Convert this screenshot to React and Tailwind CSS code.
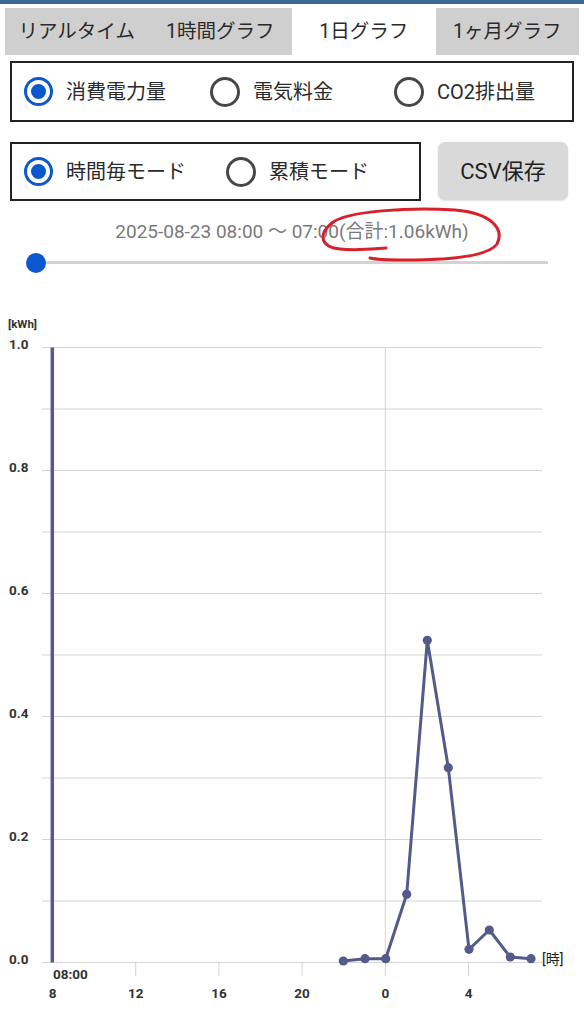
import { useState } from "react";

const TABS = ["リアルタイム", "1時間グラフ", "1日グラフ", "1ヶ月グラフ"];
const LINE = "#535b8b";

// measured points for 22:00 .. 07:00
const POINTS = [
  [343.3, 960],
  [365, 957.7],
  [385.7, 957.7],
  [406.7, 893.3],
  [427.3, 639.3],
  [448.3, 766.7],
  [469, 948.3],
  [489.3, 929],
  [510.3, 956],
  [531, 957.7],
];

const hx = (i) => 52.5 + i * 20.8;
const gy = (k) => 961.5 - k * 61.5;

export default function App() {
  const [tab, setTab] = useState(2);
  const [kind, setKind] = useState(0);
  const [mode, setMode] = useState(0);

  return (
    <div className="w-[584px] h-[1024px] bg-white overflow-hidden font-['Roboto','Noto_Sans_CJK_JP',sans-serif] text-[#222]">
      <div className="h-[4px] bg-[#3b6896]" />

      <div className="mt-[4px] mx-[5px] grid grid-cols-4 h-[47px]">
        {TABS.map((t, i) => (
          <button
            key={t}
            onClick={() => setTab(i)}
            className={`flex items-center justify-center text-[19.5px] text-[#2a2a2a] ${
              tab === i ? "bg-white" : "bg-[#cfcfcf]"
            }`}
          >
            {t}
          </button>
        ))}
      </div>

      <div className="mt-[6px] mx-[10px] h-[61px] border-2 border-[#222] grid grid-cols-[186px_184px_1fr] items-center pl-[12px]">
        {["消費電力量", "電気料金", "CO2排出量"].map((l, i) => (
          <Radio key={l} label={l} checked={kind === i} onClick={() => setKind(i)} />
        ))}
      </div>

      <div className="mt-[20px] mx-[10px] flex items-start">
        <div className="w-[411px] h-[59px] border-2 border-[#222] grid grid-cols-[202px_1fr] items-center pl-[12px]">
          {["時間毎モード", "累積モード"].map((l, i) => (
            <Radio key={l} label={l} checked={mode === i} onClick={() => setMode(i)} />
          ))}
        </div>
        <button className="ml-[17px] w-[130px] h-[58px] rounded-[7px] bg-[#d9d9d9] text-[22px] text-[#222] shadow-[0_1px_2px_rgba(0,0,0,0.12)]">
          CSV保存
        </button>
      </div>

      <div className="relative">
        <div className="pt-[18px] text-center text-[19px] leading-[26px] text-[#7a7a7a]">
          2025-08-23 08:00 〜 07:00(合計:1.06kWh)
        </div>
        <div className="relative mt-[16px] ml-[36px] mr-[36px] h-[3px] bg-[#d3d3d3]">
          <div className="absolute left-[-10px] top-[-8.5px] w-[20px] h-[20px] rounded-full bg-[#0b57d0]" />
        </div>
        <svg
          className="absolute left-0 top-0 pointer-events-none"
          width="584"
          height="80"
          viewBox="0 201 584 80"
          fill="none"
        >
          <path
            d="M332 223 C346 211 410 207 455 210 C490 213 505 228 497 244 C488 257 445 260 405 260 C390 260 378 260 370 258"
            stroke="#d8202b"
            strokeWidth="3"
            strokeLinecap="round"
          />
          <path
            d="M332 223 C318 234 320 247 340 249 C356 251 372 249 386 248"
            stroke="#d8202b"
            strokeWidth="3"
            strokeLinecap="round"
          />
        </svg>
      </div>

      <Chart />
    </div>
  );
}

function Radio({ label, checked, onClick }) {
  return (
    <div className="flex items-center gap-[13px] cursor-pointer" onClick={onClick}>
      {checked ? (
        <span className="w-[29px] h-[29px] rounded-full border-[3.5px] border-[#0b57d0] flex items-center justify-center">
          <span className="w-[15px] h-[15px] rounded-full bg-[#0b57d0]" />
        </span>
      ) : (
        <span className="w-[30px] h-[30px] rounded-full border-[3px] border-[#474747]" />
      )}
      <span className="text-[20px] text-[#2a2a2a]">{label}</span>
    </div>
  );
}

function Chart() {
  const ylabels = [10, 8, 6, 4, 2, 0];
  const xlabels = [
    [0, "8"],
    [4, "12"],
    [8, "16"],
    [12, "20"],
    [16, "0"],
    [20, "4"],
  ];
  const pts = POINTS.map((p) => p.join(",")).join(" ");

  return (
    <svg className="block mt-[27px]" width="584" height="734" viewBox="0 290 584 734">
      {Array.from({ length: 11 }, (_, k) => (
        <line key={k} x1="42" x2="542" y1={gy(k)} y2={gy(k)} stroke="#d4d4d4" strokeWidth="1" />
      ))}
      <line x1={hx(16)} x2={hx(16)} y1={gy(10)} y2="975" stroke="#d4d4d4" strokeWidth="1" />
      {[4, 8, 12, 20].map((i) => (
        <line key={i} x1={hx(i)} x2={hx(i)} y1={gy(0)} y2="975" stroke="#d4d4d4" strokeWidth="1" />
      ))}
      <line x1="52.3" x2="52.3" y1={gy(10)} y2={gy(0)} stroke={LINE} strokeWidth="3.5" />

      <text x="8" y="327" fontSize="11.5" fontWeight="700" fill="#333">
        [kWh]
      </text>
      {ylabels.map((k) => (
        <text key={k} x="9" y={gy(k) + 1} fontSize="13.5" fontWeight="700" fill="#333">
          {(k / 10).toFixed(1)}
        </text>
      ))}
      <text x="53" y="978" fontSize="13.5" fontWeight="700" fill="#333">
        08:00
      </text>
      {xlabels.map(([i, l]) => (
        <text key={l} x={hx(i)} y="997" fontSize="13.5" fontWeight="700" fill="#333" textAnchor="middle">
          {l}
        </text>
      ))}
      <text x="542" y="963" fontSize="14" fill="#222">
        [時]
      </text>

      <polyline points={pts} fill="none" stroke={LINE} strokeWidth="3" strokeLinejoin="round" />
      {POINTS.map(([x, y], i) => (
        <circle key={i} cx={x} cy={y} r="4.6" fill={LINE} />
      ))}
    </svg>
  );
}
